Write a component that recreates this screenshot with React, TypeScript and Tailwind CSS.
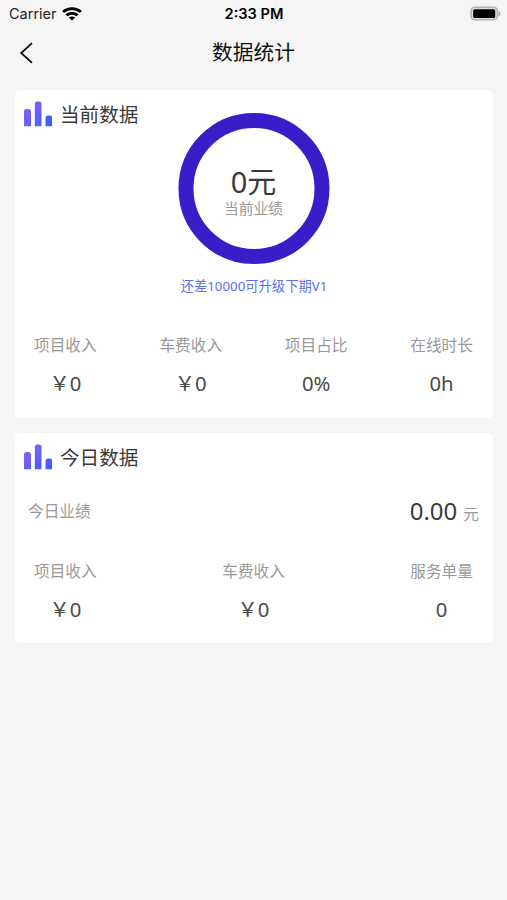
import type { ReactNode } from "react";

interface Stat {
  label: string;
  value: string;
}

const currentStats: Stat[] = [
  { label: "项目收入", value: "￥0" },
  { label: "车费收入", value: "￥0" },
  { label: "项目占比", value: "0%" },
  { label: "在线时长", value: "0h" },
];

const todayStats: Stat[] = [
  { label: "项目收入", value: "￥0" },
  { label: "车费收入", value: "￥0" },
  { label: "服务单量", value: "0" },
];

function StatusBar() {
  return (
    <div className="grid h-[27px] grid-cols-3 items-center pl-[9px] pr-[6px] font-['Inter',sans-serif] text-black">
      <div className="flex items-center gap-[5px]">
        <span className="pt-[2px] text-[14.5px] leading-none text-[#222]">Carrier</span>
        <svg width="20" height="14" viewBox="0 0 18 14" preserveAspectRatio="none" fill="none" stroke="#000" strokeWidth="2.8">
          <path d="M1 4.9C5.5 0.6 12.5 0.6 17 4.9" />
          <path d="M4 8.3C6.8 5.7 11.2 5.7 14 8.3" />
          <path d="M6.2 10.5C7.8 9 10.2 9 11.8 10.5L9 13.5Z" fill="#000" stroke="none" />
        </svg>
      </div>
      <span className="pr-[2px] pt-[2px] text-center text-[14.6px] font-semibold leading-none">2:33 PM</span>
      <svg className="justify-self-end" width="31" height="16" viewBox="0 0 31 16">
        <rect x="1" y="1.2" width="26.5" height="12.6" rx="4" fill="#ddd" stroke="#b4b4b4" strokeWidth="1.6" />
        <rect x="3.2" y="3.2" width="22" height="8.8" rx="1.5" fill="#000" />
        <path d="M28.5 5.2C31.4 6.2 31.4 9.4 28.5 10.4Z" fill="#b0b0b0" />
      </svg>
    </div>
  );
}

function CardTitle({ id, children }: { id: string; children: ReactNode }) {
  return (
    <div className="flex h-[26px] items-center gap-[8px] pl-[9px]">
      <svg width="28" height="26" viewBox="0 0 28 26">
        <defs>
          <linearGradient id={id} x1="0" y1="0" x2="28" y2="26" gradientUnits="userSpaceOnUse">
            <stop offset="0.2" stopColor="#8260f4" />
            <stop offset="1" stopColor="#345cff" />
          </linearGradient>
        </defs>
        <g fill={`url(#${id})`}>
          <path d="M0 25.2V10.6a2.5 2.5 0 0 1 2.5-2.5h2A2.5 2.5 0 0 1 7 10.6V25.2Z" />
          <path d="M10.8 25.2V3a2.5 2.5 0 0 1 2.5-2.5h1.7A2.5 2.5 0 0 1 17.5 3V25.2Z" />
          <path d="M21.5 25.2V17a2.5 2.5 0 0 1 2.5-2.5h1.7A2.5 2.5 0 0 1 28.2 17V25.2Z" />
        </g>
      </svg>
      <h2 className="pt-[2px] text-[19.6px] leading-[26px] text-[#3a3a3a]">{children}</h2>
    </div>
  );
}

function StatRow({ stats }: { stats: Stat[] }) {
  return (
    <div className="flex justify-between pl-[19px] pr-[20px]">
      {stats.map((s) => (
        <div key={s.label} className="flex flex-col items-center">
          <span className="text-[15.7px] leading-[22px] text-[#999]">{s.label}</span>
          <span className="mt-[13px] text-[20.3px] leading-[28px] text-[#484848]">{s.value}</span>
        </div>
      ))}
    </div>
  );
}

export default function App() {
  return (
    <div className="h-[900px] w-[507px] overflow-hidden bg-[#f5f5f5] font-['Noto_Sans','Noto_Sans_CJK_SC',sans-serif]">
      <StatusBar />
      <header className="grid h-[63px] grid-cols-[60px_1fr_60px] items-start">
        <button className="pl-[19px] pt-[15px]" aria-label="返回">
          <svg width="16" height="22" viewBox="0 0 16 22" fill="none" stroke="#111" strokeWidth="1.8">
            <path d="M13 1.2L2.2 11L13 20.8" />
          </svg>
        </button>
        <h1 className="pt-[10px] text-center text-[20.7px] leading-[30px] text-[#111]">数据统计</h1>
      </header>

      <main className="flex flex-col gap-[15px] pl-[15px] pr-[14px]">
        <section className="h-[328px] rounded-[5px] bg-white pt-[11px]">
          <CardTitle id="bars-current">当前数据</CardTitle>
          <div className="-mt-[14px] flex flex-col items-center">
            <div className="flex h-[151px] w-[151px] -translate-x-[0.5px] flex-col items-center rounded-full border-[15px] border-[#3a1cc8] pt-[39px]">
              <span className="text-[29px] leading-[30px] text-[#3a3a3a]">0元</span>
              <span className="mt-[3px] text-[14.7px] leading-[16px] text-[#999]">当前业绩</span>
            </div>
            <span className="mt-[12px] text-[13.3px] leading-[20px] text-[#5a70ee]">还差10000可升级下期V1</span>
          </div>
          <div className="mt-[38px]">
            <StatRow stats={currentStats} />
          </div>
        </section>

        <section className="h-[210px] rounded-[5px] bg-white pt-[11px]">
          <CardTitle id="bars-today">今日数据</CardTitle>
          <div className="mt-[23px] flex h-[36px] items-center justify-between pl-[13px] pr-[14px]">
            <span className="pt-[2px] text-[15.7px] text-[#999]">今日业绩</span>
            <span className="flex items-baseline gap-[6px]">
              <span className="text-[24px] leading-[36px] text-[#3a3a3a]">0.00</span>
              <span className="text-[15.7px] text-[#999]">元</span>
            </span>
          </div>
          <div className="mt-[31px]">
            <StatRow stats={todayStats} />
          </div>
        </section>
      </main>
    </div>
  );
}
